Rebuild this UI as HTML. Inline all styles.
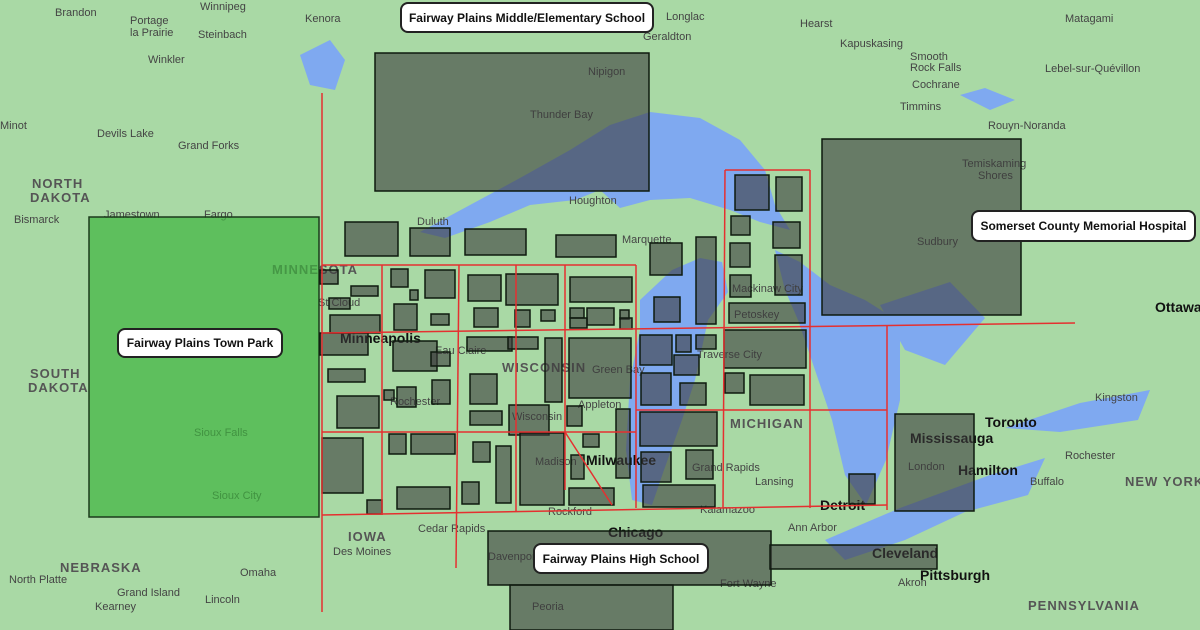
<!DOCTYPE html>
<html><head><meta charset="utf-8"><style>
body{margin:0;width:1200px;height:630px;overflow:hidden;font-family:"Liberation Sans",sans-serif}
.pill{position:absolute;background:#fff;border:2px solid #222;border-radius:8px;font-weight:bold;font-size:12px;color:#111;display:flex;align-items:center;justify-content:center;box-sizing:border-box}
</style></head><body>
<svg width="1200" height="630" style="position:absolute;left:0;top:0" font-family="Liberation Sans, sans-serif">
<rect width="1200" height="630" fill="#a9d9a5"/>
<g fill="#7fa9f0">
<polygon points="420,232 470,205 520,178 570,150 610,125 650,112 700,118 740,140 765,170 775,205 790,230 760,222 730,210 690,198 650,200 620,208 600,190 575,200 530,205 490,222 445,238"/>
<polygon points="640,300 672,270 700,258 722,262 728,292 708,320 695,380 682,420 664,470 652,505 632,500 626,450 630,380 640,330"/>
<polygon points="775,250 800,262 830,285 865,300 900,322 900,400 886,460 866,505 845,475 832,420 815,370 798,320 785,290"/>
<polygon points="880,305 950,282 985,318 945,365 905,350"/>
<polygon points="825,540 900,508 990,475 1045,458 1028,495 965,512 905,540 845,560"/>
<polygon points="1005,428 1080,403 1150,390 1138,420 1060,432"/>
<polygon points="300,55 330,40 345,60 335,90 310,85"/>
<polygon points="960,95 985,88 1015,100 990,110"/>
</g>
<g fill="#444" font-size="11">
<text x="55" y="16">Brandon</text><text x="200" y="10">Winnipeg</text><text x="130" y="24">Portage</text><text x="130" y="36">la Prairie</text><text x="198" y="38">Steinbach</text><text x="148" y="63">Winkler</text>
<text x="305" y="22">Kenora</text><text x="666" y="20">Longlac</text><text x="643" y="40">Geraldton</text><text x="800" y="27">Hearst</text><text x="840" y="47">Kapuskasing</text><text x="1065" y="22">Matagami</text><text x="910" y="60">Smooth</text><text x="910" y="71">Rock Falls</text><text x="912" y="88">Cochrane</text><text x="1045" y="72">Lebel-sur-Quévillon</text><text x="900" y="110">Timmins</text><text x="988" y="129">Rouyn-Noranda</text>
<text x="588" y="75">Nipigon</text><text x="530" y="118">Thunder Bay</text><text x="0" y="129">Minot</text><text x="97" y="137">Devils Lake</text><text x="178" y="149">Grand Forks</text><text x="14" y="223">Bismarck</text><text x="104" y="218">Jamestown</text><text x="204" y="218">Fargo</text>
<text x="569" y="204">Houghton</text><text x="622" y="243">Marquette</text><text x="417" y="225">Duluth</text><text x="318" y="306">St Cloud</text><text x="435" y="354">Eau Claire</text><text x="390" y="405">Rochester</text><text x="592" y="373">Green Bay</text><text x="578" y="408">Appleton</text><text x="512" y="420">Wisconsin</text><text x="535" y="465">Madison</text><text x="548" y="515">Rockford</text><text x="418" y="532">Cedar Rapids</text><text x="333" y="555">Des Moines</text><text x="240" y="576">Omaha</text><text x="9" y="583">North Platte</text><text x="117" y="596">Grand Island</text><text x="95" y="610">Kearney</text><text x="205" y="603">Lincoln</text><text x="194" y="436">Sioux Falls</text><text x="212" y="499">Sioux City</text>
<text x="732" y="292">Mackinaw City</text><text x="734" y="318">Petoskey</text><text x="697" y="358">Traverse City</text><text x="692" y="471">Grand Rapids</text><text x="755" y="485">Lansing</text><text x="700" y="513">Kalamazoo</text><text x="788" y="531">Ann Arbor</text><text x="720" y="587">Fort Wayne</text><text x="898" y="586">Akron</text><text x="1095" y="401">Kingston</text><text x="1065" y="459">Rochester</text><text x="1030" y="485">Buffalo</text><text x="962" y="167">Temiskaming</text><text x="978" y="179">Shores</text><text x="917" y="245">Sudbury</text><text x="908" y="470">London</text><text x="532" y="610">Peoria</text><text x="488" y="560">Davenport</text>
</g>
<g fill="#555" font-size="13" font-weight="bold" letter-spacing="1">
<text x="32" y="188">NORTH</text><text x="30" y="202">DAKOTA</text><text x="30" y="378">SOUTH</text><text x="28" y="392">DAKOTA</text><text x="272" y="274">MINNESOTA</text><text x="502" y="372">WISCONSIN</text><text x="730" y="428">MICHIGAN</text><text x="348" y="541">IOWA</text><text x="60" y="572">NEBRASKA</text><text x="1028" y="610">PENNSYLVANIA</text><text x="1125" y="486">NEW YORK</text>
</g>
<g fill="#111" font-size="14" font-weight="bold">
<text x="340" y="343">Minneapolis</text><text x="586" y="465">Milwaukee</text><text x="608" y="537">Chicago</text><text x="820" y="510">Detroit</text><text x="872" y="558">Cleveland</text><text x="920" y="580">Pittsburgh</text><text x="985" y="427">Toronto</text><text x="958" y="475">Hamilton</text><text x="910" y="443">Mississauga</text><text x="1155" y="312">Ottawa</text>
</g>
<rect x="89" y="217" width="230" height="300" fill="#3fb43f" fill-opacity="0.7" stroke="#1c3a1c" stroke-width="1.5"/>
<g fill="#3c3c3c" fill-opacity="0.6" stroke="#0f1a0f" stroke-width="1.5">
<rect x="375" y="53" width="274" height="138"/><rect x="822" y="139" width="199" height="176"/><rect x="895" y="414" width="79" height="97"/><rect x="488" y="531" width="283" height="54"/><rect x="510" y="585" width="163" height="45"/><rect x="770" y="545" width="167" height="24"/><rect x="849" y="474" width="26" height="30"/>
<rect x="345" y="222" width="53" height="34"/><rect x="410" y="228" width="40" height="28"/><rect x="465" y="229" width="61" height="26"/><rect x="556" y="235" width="60" height="22"/><rect x="650" y="243" width="32" height="32"/><rect x="696" y="237" width="20" height="87"/><rect x="654" y="297" width="26" height="25"/>
<rect x="735" y="175" width="34" height="35"/><rect x="776" y="177" width="26" height="34"/><rect x="731" y="216" width="19" height="19"/><rect x="773" y="222" width="27" height="26"/><rect x="730" y="243" width="20" height="24"/><rect x="730" y="275" width="21" height="22"/><rect x="775" y="255" width="27" height="40"/><rect x="729" y="303" width="76" height="20"/><rect x="724" y="330" width="82" height="38"/><rect x="725" y="373" width="19" height="20"/><rect x="750" y="375" width="54" height="30"/>
<rect x="640" y="335" width="32" height="30"/><rect x="676" y="335" width="15" height="17"/><rect x="696" y="335" width="20" height="14"/><rect x="674" y="355" width="25" height="20"/><rect x="641" y="373" width="30" height="32"/><rect x="680" y="383" width="26" height="22"/><rect x="640" y="412" width="77" height="34"/><rect x="641" y="452" width="30" height="30"/><rect x="686" y="450" width="27" height="29"/><rect x="643" y="485" width="72" height="22"/>
<rect x="391" y="269" width="17" height="18"/><rect x="425" y="270" width="30" height="28"/><rect x="410" y="290" width="8" height="10"/><rect x="468" y="275" width="33" height="26"/><rect x="506" y="274" width="52" height="31"/><rect x="570" y="277" width="62" height="25"/><rect x="474" y="308" width="24" height="19"/><rect x="515" y="310" width="15" height="17"/><rect x="541" y="310" width="14" height="11"/><rect x="570" y="308" width="14" height="10"/><rect x="587" y="308" width="27" height="17"/><rect x="620" y="310" width="9" height="9"/><rect x="620" y="318" width="12" height="11"/><rect x="570" y="318" width="17" height="10"/>
<rect x="320" y="270" width="18" height="14"/><rect x="351" y="286" width="27" height="10"/><rect x="329" y="298" width="21" height="11"/><rect x="330" y="315" width="50" height="18"/><rect x="320" y="333" width="48" height="22"/><rect x="328" y="369" width="37" height="13"/><rect x="337" y="396" width="42" height="32"/><rect x="322" y="438" width="41" height="55"/><rect x="367" y="500" width="15" height="14"/>
<rect x="393" y="341" width="44" height="30"/><rect x="394" y="304" width="23" height="26"/><rect x="431" y="314" width="18" height="11"/><rect x="467" y="337" width="45" height="14"/><rect x="470" y="374" width="27" height="30"/><rect x="508" y="337" width="30" height="12"/><rect x="545" y="338" width="17" height="64"/><rect x="569" y="338" width="62" height="60"/><rect x="431" y="352" width="19" height="14"/><rect x="432" y="380" width="18" height="24"/><rect x="384" y="390" width="10" height="10"/><rect x="397" y="387" width="19" height="20"/><rect x="470" y="411" width="32" height="14"/><rect x="509" y="405" width="40" height="30"/><rect x="567" y="406" width="15" height="20"/>
<rect x="389" y="434" width="17" height="20"/><rect x="411" y="434" width="44" height="20"/><rect x="473" y="442" width="17" height="20"/><rect x="496" y="446" width="15" height="57"/><rect x="462" y="482" width="17" height="22"/><rect x="397" y="487" width="53" height="22"/><rect x="520" y="433" width="44" height="72"/><rect x="571" y="455" width="13" height="24"/><rect x="569" y="488" width="45" height="17"/><rect x="583" y="434" width="16" height="13"/><rect x="616" y="409" width="14" height="69"/>
</g>
<g stroke="#e53030" stroke-width="1.5" fill="none">
<line x1="322" y1="93" x2="322" y2="612"/><line x1="382" y1="265" x2="382" y2="515"/><line x1="459" y1="265" x2="456" y2="568"/><line x1="516" y1="265" x2="516" y2="512"/><line x1="565" y1="265" x2="565" y2="490"/><line x1="636" y1="265" x2="636" y2="508"/><line x1="725" y1="170" x2="723" y2="508"/><line x1="810" y1="170" x2="810" y2="508"/><line x1="887" y1="325" x2="887" y2="510"/>
<line x1="322" y1="265" x2="636" y2="265"/><line x1="322" y1="333" x2="1075" y2="323"/><line x1="322" y1="432" x2="636" y2="432"/><line x1="636" y1="410" x2="887" y2="410"/><line x1="322" y1="515" x2="887" y2="505"/><line x1="725" y1="170" x2="810" y2="170"/><line x1="565" y1="432" x2="612" y2="505"/>
</g>
</svg>
<div class="pill" style="left:400px;top:2px;width:254px;height:31px">Fairway Plains Middle/Elementary School</div>
<div class="pill" style="left:971px;top:210px;width:225px;height:32px">Somerset County Memorial Hospital</div>
<div class="pill" style="left:117px;top:328px;width:166px;height:30px">Fairway Plains Town Park</div>
<div class="pill" style="left:533px;top:543px;width:176px;height:31px">Fairway Plains High School</div>
</body></html>
